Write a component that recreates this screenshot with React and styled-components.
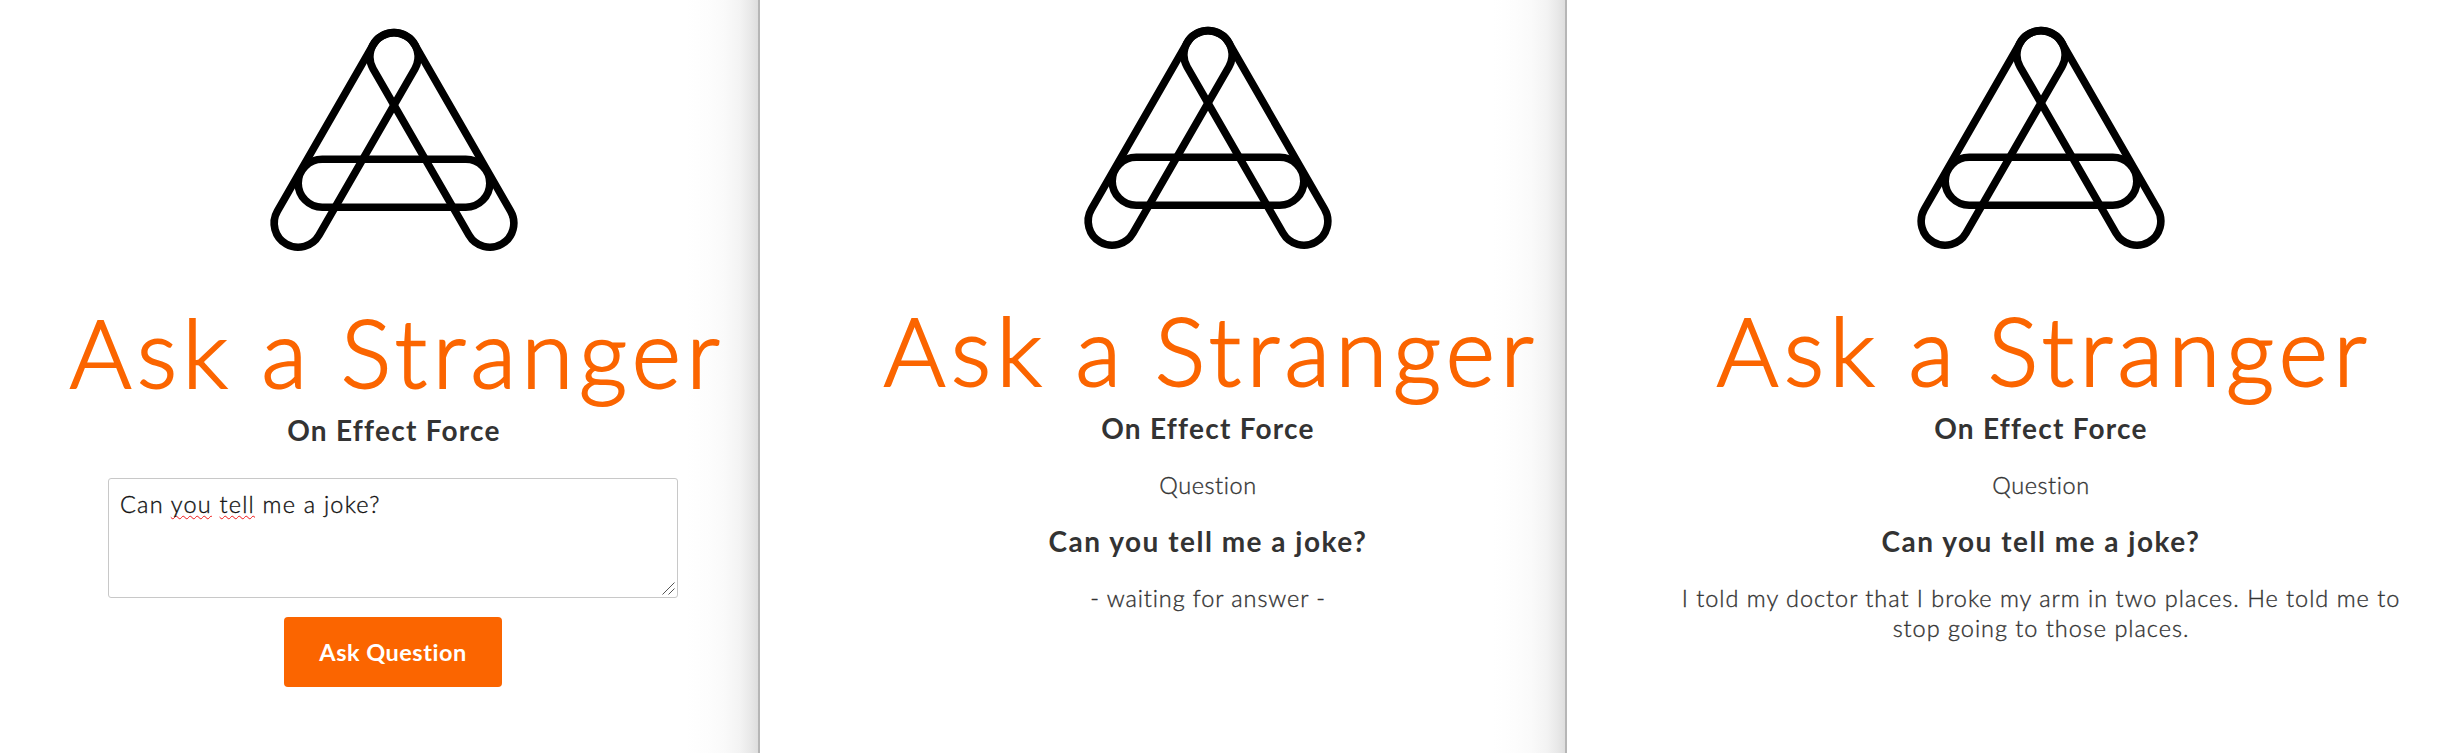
import React from "react";
import styled, { createGlobalStyle } from "styled-components";

const GlobalStyle = createGlobalStyle`
  body {
    margin: 0;
    background: #fff;
    overflow: hidden;
  }
`;

const Page = styled.main`
  display: flex;
  width: 2449px;
  height: 753px;
  background: #fff;
  font-family: Lato, "Open Sans", sans-serif;
  font-weight: 300;
  font-size: 23.5px;
  line-height: 30px;
  color: #333;
  font-variant-ligatures: none;
`;

const Panel = styled.section`
  box-sizing: border-box;
  flex: none;
  display: flex;
  flex-direction: column;
  align-items: center;
  width: ${(p) => p.$width}px;
  height: 100%;
  padding-top: ${(p) => p.$top || 0}px;
  padding-left: ${(p) => p.$indent}px;
  ${(p) =>
    p.$edge &&
    `
    border-right: 2px solid #b6b6b6;
    background: linear-gradient(to left, #dedede 0, #e9e9e9 8px, #f3f3f3 18px, #fafafa 34px, #fdfdfd 50px, #fff 72px);
  `}
`;

const LogoArt = styled.svg`
  display: block;
  flex: none;
  width: 280px;
  height: 290px;
  fill: none;
  stroke: #000;
  stroke-width: 7.6;
`;

const Title = styled.h1`
  margin: 0;
  font-size: 94px;
  font-weight: 300;
  line-height: 120px;
  letter-spacing: 5.6px;
  word-spacing: -2.5px;
  margin-right: -7px;
  white-space: nowrap;
  color: #fb6500;
  -webkit-text-stroke: 2px #fb6500;
  stroke-linejoin: round;
`;

const Heading = styled.h2`
  margin: ${(p) => p.$gap}px 0 0;
  font-size: 28px;
  font-weight: 700;
  line-height: 34px;
  letter-spacing: ${(p) => p.$spacing}px;
  white-space: nowrap;
`;

const Text = styled.p`
  margin: ${(p) => p.$gap}px 0 0;
  letter-spacing: ${(p) => p.$spacing}px;
  text-align: center;
  white-space: nowrap;
  -webkit-text-stroke: 0.35px currentColor;
`;

const QuestionField = styled.div`
  box-sizing: border-box;
  position: relative;
  width: 570px;
  height: 120px;
  margin-top: 31px;
  margin-right: 2px;
  padding: 10px 11px;
  border: 1px solid #c8c8c8;
  border-radius: 3px;
  background: #fff;
  color: #111;
  letter-spacing: 1.2px;
  -webkit-text-stroke: 0.35px currentColor;
`;

const Misspelled = styled.span`
  text-decoration: underline wavy #f01818 1.4px;
  text-decoration-skip-ink: none;
  text-underline-offset: 2px;
`;

const Grip = styled.svg`
  position: absolute;
  right: 2px;
  bottom: 2px;
  width: 13px;
  height: 13px;
  stroke: #555;
  stroke-width: 1;
`;

const AskButton = styled.button`
  width: 218px;
  height: 70px;
  margin-top: 19px;
  margin-right: 2px;
  padding: 0;
  border: 0;
  border-radius: 4px;
  background: #fb6500;
  color: #fff;
  font: 700 23.5px/30px Lato, "Open Sans", sans-serif;
  letter-spacing: 0.5px;
`;

function Logo() {
  return (
    <LogoArt viewBox="0 0 280 290" aria-hidden="true">
      <path d="M119.1 42.8 23.4 209.2A24 24 0 0 0 65 233.2L160.9 66.8A24 24 0 1 0 119.1 42.8Z" />
      <path d="M160.9 42.8 256.6 209.2A24 24 0 0 1 215 233.2L119.1 66.8A24 24 0 1 1 160.9 42.8Z" />
      <rect x="44.2" y="157.2" width="191.6" height="48" rx="24" />
    </LogoArt>
  );
}

function Masthead() {
  return (
    <>
      <Logo />
      <Title>Ask a Stranger</Title>
      <Heading $gap={1} $spacing={1.25}>On Effect Force</Heading>
    </>
  );
}

export default function App() {
  return (
    <>
      <GlobalStyle />
      <Page>
        <Panel $width={760} $indent={30} $top={2} $edge>
          <Masthead />
          <QuestionField>
            Can <Misspelled>you</Misspelled> <Misspelled>tell</Misspelled> me a joke?
            <Grip viewBox="0 0 13 13">
              <path d="M0.5 12.5 12.5 0.5M6.5 12.5 12.5 6.5" />
            </Grip>
          </QuestionField>
          <AskButton>Ask Question</AskButton>
        </Panel>
        <Panel $width={807} $indent={91} $edge>
          <Masthead />
          <Text $gap={25} $spacing={0.6}>Question</Text>
          <Heading $gap={24} $spacing={1.5}>Can you tell me a joke?</Heading>
          <Text $gap={25} $spacing={0.9}>- waiting for answer -</Text>
        </Panel>
        <Panel $width={882} $indent={66}>
          <Masthead />
          <Text $gap={25} $spacing={0.6}>Question</Text>
          <Heading $gap={24} $spacing={1.5}>Can you tell me a joke?</Heading>
          <Text $gap={25} $spacing={0.98}>
            I told my doctor that I broke my arm in two places. He told me to
            <br />
            stop going to those places.
          </Text>
        </Panel>
      </Page>
    </>
  );
}
